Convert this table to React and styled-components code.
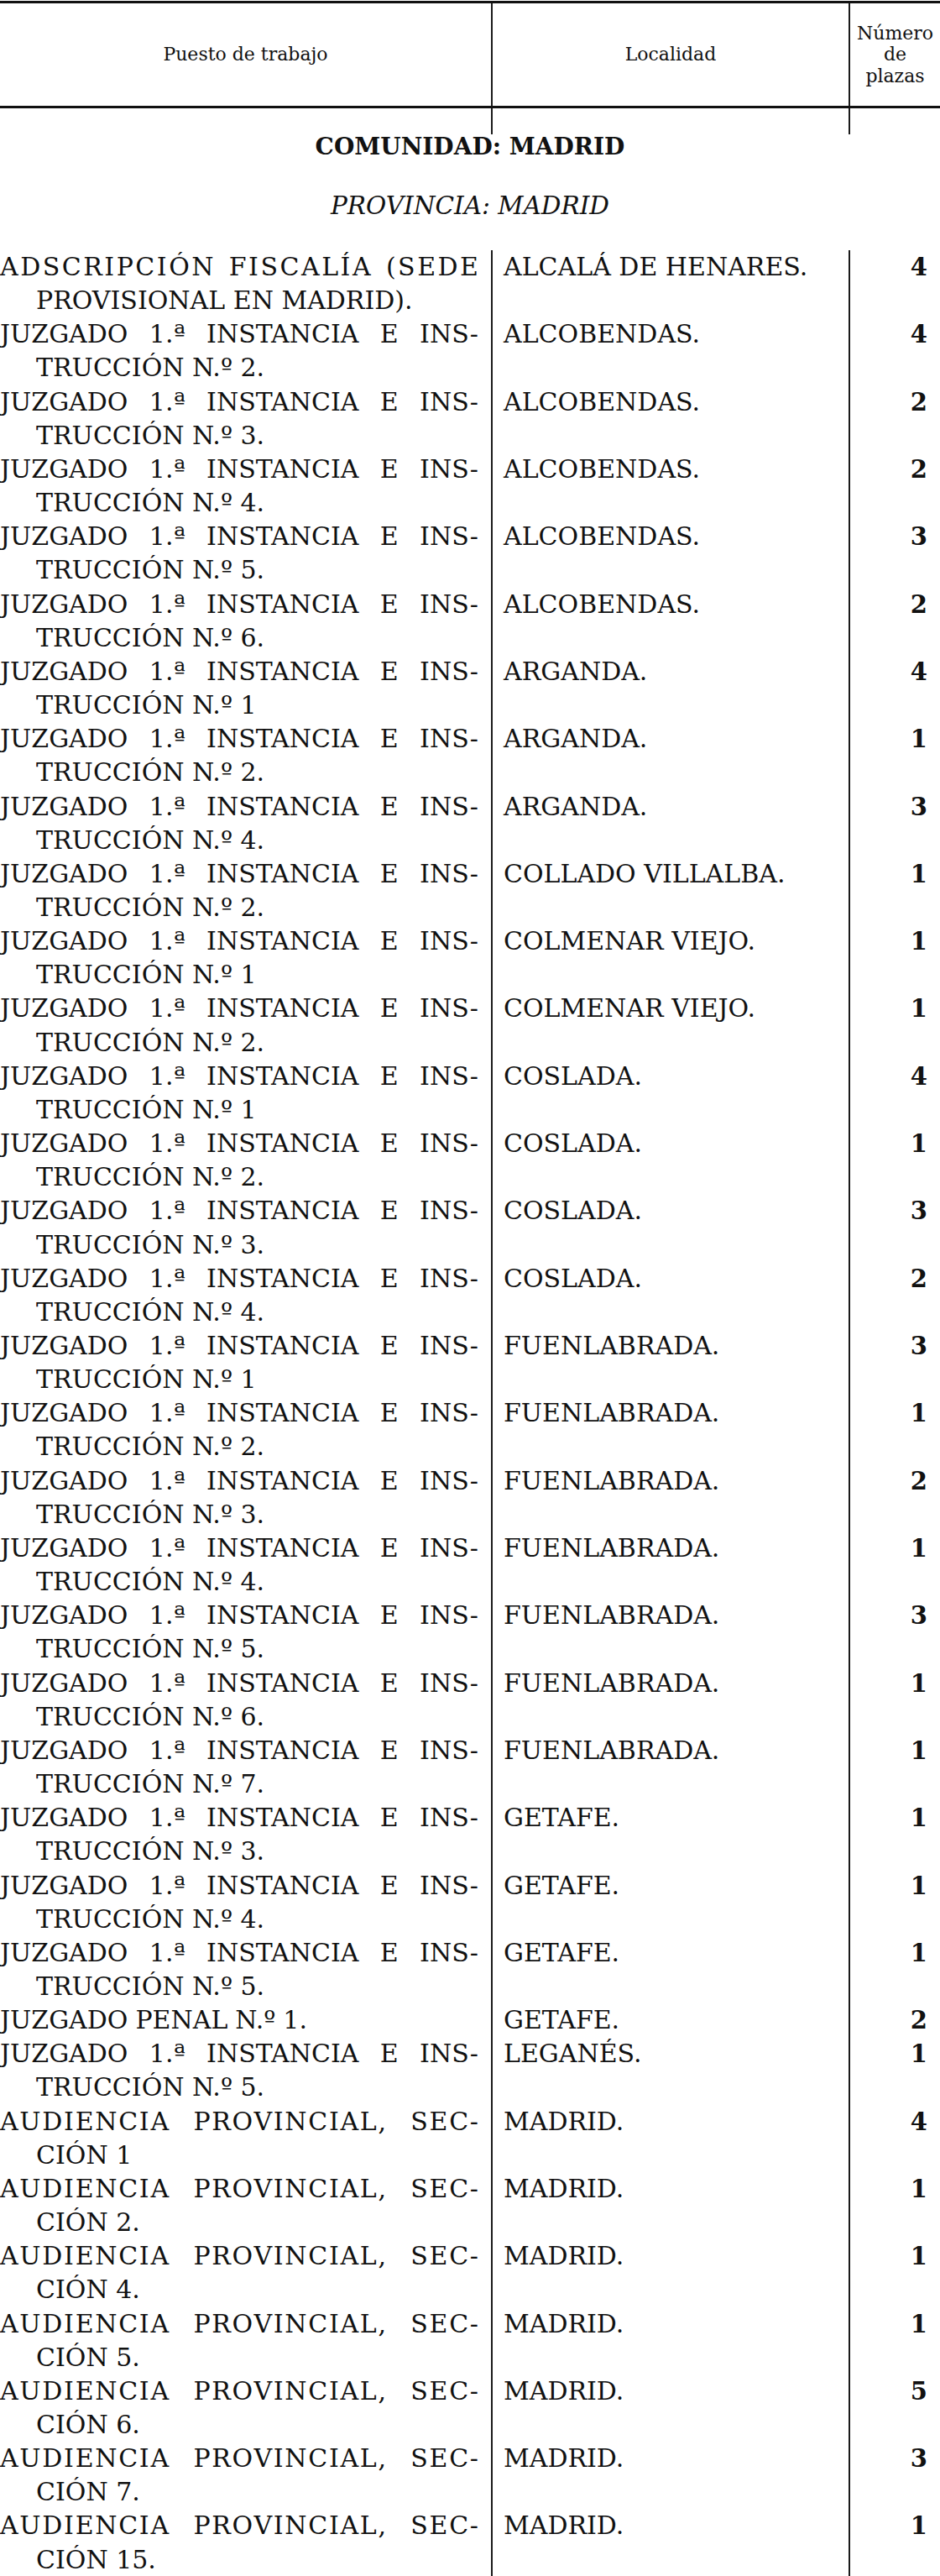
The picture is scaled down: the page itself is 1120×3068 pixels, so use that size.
import React from 'react';
import styled, { createGlobalStyle } from 'styled-components';

const GlobalStyle = createGlobalStyle`
  html, body {
    margin: 0;
    padding: 0;
    background: #ffffff;
  }
  body {
    font-family: "DejaVu Serif", "Liberation Serif", serif;
    color: #111111;
  }
`;

const JUZ = 'JUZGADO 1.ª INSTANCIA E INS-';
const AUD = 'AUDIENCIA PROVINCIAL, SEC-';

// letter spacing the typesetter used on some justified first lines
const spacingFor = first => {
  if (first.startsWith('ADSCRIPCIÓN')) return 2.5;
  if (first.startsWith('AUDIENCIA')) return 1.7;
  return 0;
};

const rows = [
  ['ADSCRIPCIÓN FISCALÍA (SEDE', 'PROVISIONAL EN MADRID).', 'ALCALÁ DE HENARES.', 4],
  [JUZ, 'TRUCCIÓN N.º 2.', 'ALCOBENDAS.', 4],
  [JUZ, 'TRUCCIÓN N.º 3.', 'ALCOBENDAS.', 2],
  [JUZ, 'TRUCCIÓN N.º 4.', 'ALCOBENDAS.', 2],
  [JUZ, 'TRUCCIÓN N.º 5.', 'ALCOBENDAS.', 3],
  [JUZ, 'TRUCCIÓN N.º 6.', 'ALCOBENDAS.', 2],
  [JUZ, 'TRUCCIÓN N.º 1', 'ARGANDA.', 4],
  [JUZ, 'TRUCCIÓN N.º 2.', 'ARGANDA.', 1],
  [JUZ, 'TRUCCIÓN N.º 4.', 'ARGANDA.', 3],
  [JUZ, 'TRUCCIÓN N.º 2.', 'COLLADO VILLALBA.', 1],
  [JUZ, 'TRUCCIÓN N.º 1', 'COLMENAR VIEJO.', 1],
  [JUZ, 'TRUCCIÓN N.º 2.', 'COLMENAR VIEJO.', 1],
  [JUZ, 'TRUCCIÓN N.º 1', 'COSLADA.', 4],
  [JUZ, 'TRUCCIÓN N.º 2.', 'COSLADA.', 1],
  [JUZ, 'TRUCCIÓN N.º 3.', 'COSLADA.', 3],
  [JUZ, 'TRUCCIÓN N.º 4.', 'COSLADA.', 2],
  [JUZ, 'TRUCCIÓN N.º 1', 'FUENLABRADA.', 3],
  [JUZ, 'TRUCCIÓN N.º 2.', 'FUENLABRADA.', 1],
  [JUZ, 'TRUCCIÓN N.º 3.', 'FUENLABRADA.', 2],
  [JUZ, 'TRUCCIÓN N.º 4.', 'FUENLABRADA.', 1],
  [JUZ, 'TRUCCIÓN N.º 5.', 'FUENLABRADA.', 3],
  [JUZ, 'TRUCCIÓN N.º 6.', 'FUENLABRADA.', 1],
  [JUZ, 'TRUCCIÓN N.º 7.', 'FUENLABRADA.', 1],
  [JUZ, 'TRUCCIÓN N.º 3.', 'GETAFE.', 1],
  [JUZ, 'TRUCCIÓN N.º 4.', 'GETAFE.', 1],
  [JUZ, 'TRUCCIÓN N.º 5.', 'GETAFE.', 1],
  ['JUZGADO PENAL N.º 1.', null, 'GETAFE.', 2],
  [JUZ, 'TRUCCIÓN N.º 5.', 'LEGANÉS.', 1],
  [AUD, 'CIÓN 1', 'MADRID.', 4],
  [AUD, 'CIÓN 2.', 'MADRID.', 1],
  [AUD, 'CIÓN 4.', 'MADRID.', 1],
  [AUD, 'CIÓN 5.', 'MADRID.', 1],
  [AUD, 'CIÓN 6.', 'MADRID.', 5],
  [AUD, 'CIÓN 7.', 'MADRID.', 3],
  [AUD, 'CIÓN 15.', 'MADRID.', 1],
];

const Page = styled.div`
  width: 1120px;
  padding-top: 1px;
`;

const Columns = styled.div`
  display: grid;
  grid-template-columns: 587px 426px 1fr;
`;

const HeaderRow = styled(Columns)`
  border-top: 3px solid #111;
  border-bottom: 3px solid #111;
  height: 122px;
`;

const HeaderCell = styled.div`
  display: flex;
  align-items: center;
  justify-content: center;
  text-align: center;
  font-size: 22px;
  line-height: 25.5px;
  border-right: ${p => (p.$last ? 'none' : '2px solid #1a1a1a')};
`;

const GapRow = styled(Columns)`
  height: 31px;
`;

const GapCell = styled.div`
  border-right: ${p => (p.$last ? 'none' : '2px solid #1a1a1a')};
`;

const Community = styled.h2`
  margin: 0;
  text-align: center;
  font-size: 28px;
  line-height: 30px;
  font-weight: 700;
`;

const Province = styled.h3`
  margin: 40px 0 0;
  text-align: center;
  font-size: 29.5px;
  line-height: 30px;
  font-weight: 400;
  font-style: italic;
`;

const Body = styled.div`
  margin-top: 38px;
`;

const Row = styled(Columns)``;

const PostCell = styled.div`
  padding-right: 15px;
  font-size: 30px;
  line-height: 40.15px;
  border-right: 2px solid #1a1a1a;
`;

const JustifiedLine = styled.div`
  display: flex;
  justify-content: ${p => (p.$justify ? 'space-between' : 'flex-start')};
  gap: ${p => (p.$justify ? '0' : '0.3em')};
  letter-spacing: ${p => p.$spacing}px;
  white-space: nowrap;

  & > span:last-child {
    margin-right: -${p => p.$spacing}px;
  }
`;

const HangingLine = styled.div`
  padding-left: 43px;
  white-space: nowrap;
`;

const PlaceCell = styled.div`
  padding-left: 13px;
  font-size: 30px;
  line-height: 40.15px;
  white-space: nowrap;
  border-right: 2px solid #1a1a1a;
`;

const CountCell = styled.div`
  padding-right: 15px;
  text-align: right;
  font-size: 29px;
  font-weight: 700;
  line-height: 40.15px;
`;

const Words = ({ text, justify, spacing }) => (
  <JustifiedLine $justify={justify} $spacing={spacing}>
    {text.split(' ').map((w, i) => (
      <span key={i}>{w}</span>
    ))}
  </JustifiedLine>
);

export default function App() {
  return (
    <Page>
      <GlobalStyle />
      <HeaderRow>
        <HeaderCell>Puesto de trabajo</HeaderCell>
        <HeaderCell>Localidad</HeaderCell>
        <HeaderCell $last>
          Número
          <br />
          de
          <br />
          plazas
        </HeaderCell>
      </HeaderRow>
      <GapRow>
        <GapCell />
        <GapCell />
        <GapCell $last />
      </GapRow>

      <Community>COMUNIDAD: MADRID</Community>
      <Province>PROVINCIA: MADRID</Province>

      <Body>
        {rows.map(([first, second, place, count], i) => (
          <Row key={i}>
            <PostCell>
              <Words text={first} justify={!!second} spacing={second ? spacingFor(first) : 0} />
              {second && <HangingLine>{second}</HangingLine>}
            </PostCell>
            <PlaceCell>{place}</PlaceCell>
            <CountCell>{count}</CountCell>
          </Row>
        ))}
      </Body>
    </Page>
  );
}
